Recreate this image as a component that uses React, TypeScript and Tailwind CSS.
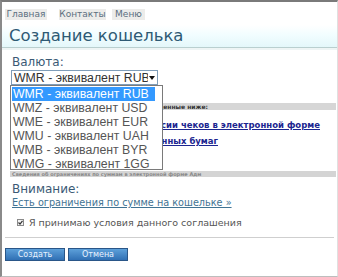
import React from "react";

const dv = { fontFamily: '"DejaVu Sans", Verdana, sans-serif' };
const ar = { fontFamily: '"Liberation Sans", Arial, sans-serif' };

const items = [
  "WMR - эквивалент RUB",
  "WMZ - эквивалент USD",
  "WME - эквивалент EUR",
  "WMU - эквивалент UAH",
  "WMB - эквивалент BYR",
  "WMG - эквивалент 1GG",
];

export default function App() {
  return (
    <div className="w-[338px] h-[277px] bg-white overflow-hidden relative" style={dv}>
      <div className="h-full border-t-2 border-t-[#7a7a7a] border-l-2 border-l-[#8a8a8a] border-r border-r-[#e0e0e0] border-b border-b-[#bdbdbd] flex flex-col">
        {/* tabs */}
        <div className="flex pt-[7px] h-[23px]">
          <div className="ml-[3px] w-[42px] h-[11px] bg-[#ececea] text-[#5b6f80] text-[9px] leading-[11px] text-center">Главная</div>
          <div className="ml-[12px] w-[47px] h-[11px] bg-[#ececea] text-[#5b6f80] text-[9px] leading-[11px] text-center">Контакты</div>
          <div className="ml-[6px] w-[33px] h-[11px] bg-[#ececea] text-[#5b6f80] text-[9px] leading-[11px] text-center">Меню</div>
        </div>
        {/* heading */}
        <div className="h-[23px] bg-gradient-to-b from-white via-[#f0fdff] to-[#e4f7fa] border-b border-b-[#b9cfcf] pl-[7px] flex items-end">
          <div className="text-[16.5px] leading-[20px] text-[#2e5a74] pb-[1px]">Создание кошелька</div>
        </div>
        <div className="h-[2px] bg-[#eef5f5]" />
        {/* body */}
        <div className="relative flex flex-col pl-[8px] pr-[1px]">
          <div className="text-[12px] leading-[14px] text-[#3b5a75] pt-[5px] pl-[2px]">Валюта:</div>
          <div className="h-[1px]" />
          <div className="ml-[1px] w-[147px] h-[15px] border border-[#7f9db9] bg-white flex items-center pl-[2px] relative overflow-hidden" style={ar}>
            <span className="text-[12.3px] leading-[14px] text-[#333] whitespace-nowrap">WMR - эквивалент RUB</span>
            <div className="absolute right-[1px] top-[1px] w-[8px] h-[11px] bg-white flex items-center justify-center">
              <svg width="6" height="4" viewBox="0 0 6 4"><path d="M0 0h6L3 4z" fill="#111" /></svg>
            </div>
          </div>
          {/* background section (under dropdown) */}
          <div className="mt-[18px] h-[7px] bg-[#d6d6d6] flex justify-end items-center overflow-hidden whitespace-nowrap pr-[128px]">
            <span className="shrink-0 text-[6px] leading-[6px] font-bold text-[#333]">Внимательно ознакомьтесь с документами, приведенные ниже:</span>
          </div>
          <div className="pt-[8px] flex flex-col">
            <div className="h-[15px] flex justify-end items-center overflow-hidden whitespace-nowrap pr-[16px]">
              <span className="shrink-0 text-[8.5px] leading-[15px] font-bold text-[#1c2690] underline">Положение о порядке эмиссии чеков в электронной форме</span>
            </div>
            <div className="h-[16px] flex justify-end items-center overflow-hidden whitespace-nowrap pr-[118px]">
              <span className="shrink-0 text-[8.5px] leading-[15px] font-bold text-[#1c2690] underline">Положение о выпуске ценных бумаг</span>
            </div>
          </div>
          <div className="mt-[22px] h-[6px] bg-[#d4d4d4] flex items-center pl-[2px] overflow-hidden whitespace-nowrap">
            <span className="text-[5px] leading-[5px] font-bold text-[#888]">Сведения об ограничениях по суммам в электронной форме Адм</span>
          </div>
          <div className="text-[12px] leading-[14px] text-[#3b5a75] pt-[5px] pl-[2px]">Внимание:</div>
          <div className="pl-[2px] text-[9.7px] leading-[13px]">
            <span className="text-[#3f7393] underline">Есть ограничения по сумме на кошельке »</span>
          </div>
          <div className="flex items-center gap-[5px] pl-[7px] pt-[7px] text-[9.5px] leading-[13px]">
            <div className="w-[7px] h-[7px] border border-[#8a8a8a] bg-[#f4f4f4] flex items-center justify-center">
              <svg width="5" height="5" viewBox="0 0 5 5"><path d="M0.5 2.5L2 4L4.5 0.8" stroke="#333" strokeWidth="1.2" fill="none" /></svg>
            </div>
            <span className="text-[#555]">Я принимаю условия данного соглашения</span>
          </div>

          {/* dropdown list overlay */}
          <div className="absolute left-[8px] top-[35px] w-[153px] h-[85px] bg-white border border-[#7a7a7a] flex flex-col pt-[1px] overflow-hidden" style={ar}>
            {items.map((t, i) => (
              <div
                key={t}
                className={
                  i === 0
                    ? "h-[14px] w-[143px] ml-[1px] bg-[#3399ff] text-white text-[12.3px] leading-[14px] pl-[1px] whitespace-nowrap"
                    : "h-[14px] text-[#555] text-[12.3px] leading-[14px] pl-[2px] whitespace-nowrap"
                }
              >
                {t}
              </div>
            ))}
          </div>
        </div>
        <div className="mx-[3px] mt-[8px] h-px bg-[#cfcfcf]" />
        <div className="flex gap-[3px] pl-[3px] pt-[10px]">
          <button className="w-[60px] h-[13px] bg-gradient-to-b from-[#5da0da] to-[#3070b4] border border-[#2a5688] text-[8px] leading-[11px] text-[#e8f2ff]">Создать</button>
          <button className="w-[60px] h-[13px] bg-gradient-to-b from-[#5da0da] to-[#3070b4] border border-[#2a5688] text-[8px] leading-[11px] text-[#e8f2ff]">Отмена</button>
        </div>
      </div>
    </div>
  );
}
